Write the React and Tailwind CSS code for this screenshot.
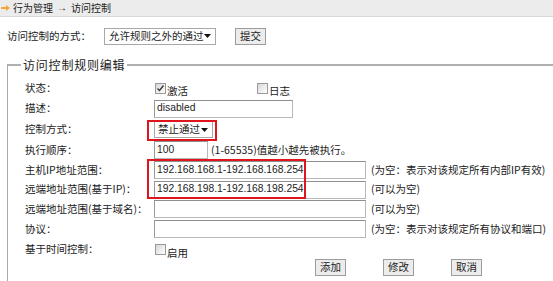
export default function App() {
  const cjk = "font-['Noto_Sans_CJK_SC',sans-serif]";
  const lat = "font-['Liberation_Sans',Arial,sans-serif]";
  const Check = ({ checked }) => (
    <span className="inline-flex w-[11px] h-[11px] border border-[#9a9a9a] bg-gradient-to-br from-[#d8d8d8] to-[#ffffff] items-center justify-center shrink-0">
      {checked && (
        <svg width="9" height="9" viewBox="0 0 9 9">
          <path d="M1.5 4.5 L3.5 6.5 L7.5 1.5" stroke="#333" strokeWidth="1.3" fill="none" />
        </svg>
      )}
    </span>
  );
  const Arrow = () => (
    <svg width="7" height="4" viewBox="0 0 7 4" className="ml-auto shrink-0">
      <path d="M0 0 L7 0 L3.5 4 Z" fill="#111" />
    </svg>
  );
  const Input = ({ w, v = "" }) => (
    <div className={`h-[18px] ${w} shrink-0 border border-[#b8b8b8] border-t-[#8e8e8e] border-l-[#9a9a9a] bg-white flex items-center px-[2px] ${lat} text-[10.3px] text-[#222] leading-none`}>
      {v}
    </div>
  );
  const Row = ({ label, h = "h-[20px]", children }) => (
    <div className={`flex items-center ${h} whitespace-nowrap`}>
      <div className="w-[129px] shrink-0 leading-none">{label}</div>
      {children}
    </div>
  );
  const Btn = ({ t }) => (
    <div className="h-[17px] px-[4px] border border-[#9c9c9c] bg-[#ececec] flex items-center leading-none whitespace-nowrap">{t}</div>
  );
  return (
    <div className={`w-[553px] h-[281px] bg-white overflow-hidden text-[10.5px] leading-none text-[#222] ${cjk} relative`}>
      <div className="h-[17px] bg-[#ececec] border-b border-[#d8d8d8] flex items-center pl-[1px] whitespace-nowrap text-[10px]">
        <svg width="10" height="6" viewBox="0 0 10 6" className="mr-[2px]">
          <path d="M0 2 H5 V0 L9 3 L5 6 V4 H0 Z" fill="#f3a63a" />
        </svg>
        <span>行为管理</span>
        <span className={`${lat} mx-[4px] text-[10px]`}>→</span>
        <span>访问控制</span>
      </div>
      <div className="flex items-center mt-[10px] pl-[7px] h-[18px] whitespace-nowrap">
        <span className="w-[97px]">访问控制的方式：</span>
        <div className="w-[112px] h-[17px] border border-[#a8a8a8] bg-white flex items-center px-[4px] pr-[6px]">
          <span>允许规则之外的通过</span>
          <Arrow />
        </div>
        <div className="ml-[19px]"><Btn t="提交" /></div>
      </div>
      <fieldset className="mt-[14px] ml-[7px] border-t-2 border-l border-[#a9a9a9] border-t-[#b0b0b0] pl-[17px] pb-[20px]">
        <legend className="ml-[-4px] px-[2px] text-[12px] tracking-[0.8px] leading-none whitespace-nowrap">访问控制规则编辑</legend>
        <div className="mt-[7px]">
          <Row label="状态：">
            <div className="flex items-end ml-[1px]">
              <Check checked />
              <span className="ml-[1px] translate-y-[3px]">激活</span>
            </div>
            <div className="flex items-end ml-[69px]">
              <Check />
              <span className="ml-[1px] translate-y-[3px]">日志</span>
            </div>
          </Row>
          <Row label="描述：" h="h-[21px]">
            <Input w="w-[139px]" v="disabled" />
          </Row>
          <Row label="控制方式：" h="h-[21px]">
            <div className="flex items-center h-[17px] w-[59px] border border-[#a8a8a8] bg-white px-[3px] pr-[4px]">
              <span>禁止通过</span>
              <Arrow />
            </div>
          </Row>
          <Row label="执行顺序：">
            <Input w="w-[54px]" v="100" />
            <span className="ml-[3px]">(1-65535)值越小越先被执行。</span>
          </Row>
          <Row label="主机IP地址范围：">
            <Input w="w-[212px]" v="192.168.168.1-192.168.168.254" />
            <span className="ml-[5px]">(为空：表示对该规定所有内部IP有效)</span>
          </Row>
          <Row label="远端地址范围(基于IP)：" h="h-[19px]">
            <Input w="w-[212px]" v="192.168.198.1-192.168.198.254" />
            <span className="ml-[5px]">(可以为空)</span>
          </Row>
          <Row label="远端地址范围(基于域名)：">
            <Input w="w-[212px]" />
            <span className="ml-[5px]">(可以为空)</span>
          </Row>
          <Row label="协议：">
            <Input w="w-[212px]" />
            <span className="ml-[5px]">(为空：表示对该规定所有协议和端口)</span>
          </Row>
          <Row label="基于时间控制：" h="h-[21px]">
            <div className="flex items-end ml-[1px]">
              <Check />
              <span className="ml-[1px] translate-y-[3px]">启用</span>
            </div>
          </Row>
          <div className="flex pl-[290px] gap-[37px] mt-[-1px]">
            <Btn t="添加" />
            <Btn t="修改" />
            <Btn t="取消" />
          </div>
        </div>
      </fieldset>
      <div className="absolute left-[147px] top-[120px] w-[70px] h-[21px] border-2 border-[#e0141c] pointer-events-none" />
      <div className="absolute left-[147px] top-[159px] w-[159px] h-[40px] border-2 border-[#e0141c] pointer-events-none" />
    </div>
  );
}
